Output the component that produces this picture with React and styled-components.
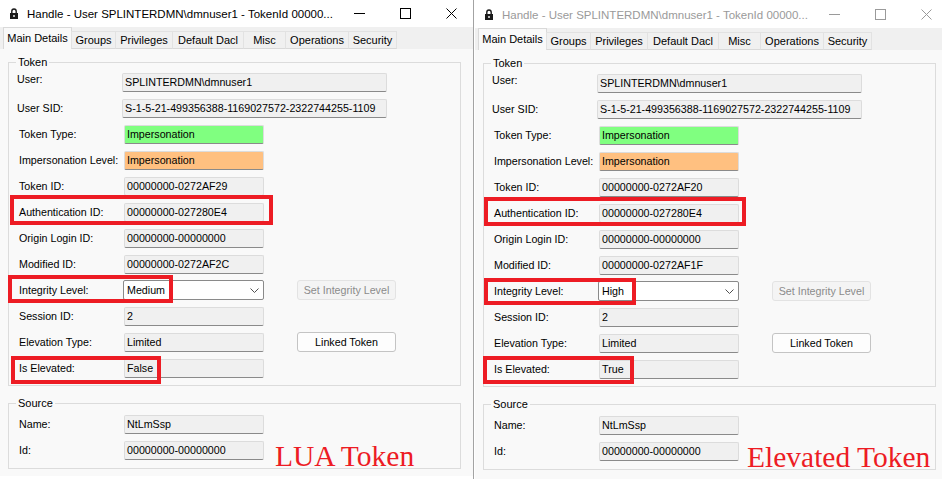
import React from 'react';
import styled, { createGlobalStyle, css } from 'styled-components';

const Global = createGlobalStyle`
  html, body { margin: 0; padding: 0; background: #ffffff; }
  body {
    width: 942px; height: 484px; overflow: hidden;
    font-family: "Liberation Sans", Arial, sans-serif;
    -webkit-font-smoothing: antialiased;
  }
`;

const Desktop = styled.div`
  display: flex;
  align-items: flex-start;
  width: 942px;
  height: 484px;
  overflow: hidden;
  background: #ffffff;
`;

const Window = styled.div`
  flex: none;
  width: 473px;
  height: ${p => p.$h}px;
  display: flex;
  flex-direction: column;
  background: #ffffff;
  ${p => p.$framed && css`
    width: 475px;
    border-left: 1px solid #a3a3a3;
    padding: 1px 0 0 1px;
    box-sizing: border-box;
  `}
`;

const TitleBar = styled.div`
  flex: none;
  height: 27px;
  display: flex;
  align-items: center;
  background: #ffffff;
  color: ${p => (p.$active ? '#000000' : '#9a9a9a')};
`;

const LockIcon = styled.svg`
  flex: none;
  margin-left: 10px;
  width: 8px;
  height: 11px;
`;

const TitleText = styled.div`
  flex: 1;
  margin-left: 9px;
  font-size: 11.5px;
  white-space: nowrap;
  overflow: hidden;
`;

const Controls = styled.div`
  flex: none;
  display: flex;
  margin-right: -1px;
`;

const CtrlButton = styled.div`
  width: 46px;
  height: 27px;
  display: flex;
  align-items: center;
  justify-content: center;
`;

const TabStrip = styled.div`
  flex: none;
  height: 22px;
  display: flex;
  align-items: flex-end;
  padding-left: 3px;
  background: #f0f0f0;
  position: relative;
  z-index: 1;
`;

const Tab = styled.div`
  flex: none;
  box-sizing: border-box;
  width: ${p => p.$w}px;
  height: ${p => (p.$selected ? 22 : 18)}px;
  display: flex;
  align-items: center;
  justify-content: center;
  font-size: 11px;
  color: #000;
  background: ${p => (p.$selected ? '#f9f9f9' : '#f0f0f0')};
  border: 1px solid ${p => (p.$selected ? '#d9d9d9' : '#e2e2e2')};
  border-bottom: ${p => (p.$selected ? 'none' : '1px solid #d9d9d9')};
  margin-left: ${p => (p.$first ? 0 : -1)}px;
  padding-bottom: ${p => (p.$selected ? 2 : 0)}px;
`;

const TabPage = styled.div`
  flex: 1;
  background: #f9f9f9;
  border-top: 1px solid #d9d9d9;
  margin-top: -1px;
  padding: 6px 0 0 8px;
  box-sizing: border-box;
`;

const Group = styled.fieldset`
  margin: ${p => p.$mt}px 0 0 0;
  width: 453px;
  box-sizing: border-box;
  border: 1px solid #dcdcdc;
  padding: ${p => p.$pt || 0}px 0 ${p => p.$pb}px 10px;
  min-width: 0;
`;

const Legend = styled.legend`
  margin-left: -3px;
  padding: 0 2px;
  font-size: 11px;
  line-height: 14px;
  color: #000;
`;

const Row = styled.div`
  position: relative;
  height: 26px;
  display: flex;
  align-items: center;
`;

const Label = styled.div`
  flex: none;
  width: 105px;
  box-sizing: border-box;
  margin-left: ${p => p.$shift || 0}px;
  padding-right: ${p => -(p.$shift || 0)}px;
  margin-top: ${p => (p.$lift ? -6 : 0)}px;
  font-size: 10.7px;
  color: #000;
  white-space: nowrap;
`;

const tones = {
  plain: '#f0f0f0',
  green: '#80ff80',
  orange: '#ffc080',
};

const Field = styled.div`
  flex: none;
  box-sizing: border-box;
  width: ${p => (p.$wide ? 265 : 140)}px;
  height: 19px;
  padding: 0 0 0 2px;
  background: ${p => tones[p.$tone || 'plain']};
  border: 1px solid #dcdcdc;
  border-bottom-color: #8a8a8a;
  border-radius: 2px;
  font-size: 10.7px;
  line-height: 17px;
  color: #000;
  white-space: nowrap;
  overflow: hidden;
`;

const Combo = styled.div`
  flex: none;
  box-sizing: border-box;
  width: 141px;
  height: 20px;
  margin-left: -1px;
  padding: 0 4px 0 3px;
  display: flex;
  align-items: center;
  justify-content: space-between;
  background: #ffffff;
  border: 1px solid #8a8a8a;
  border-radius: 2px;
  font-size: 10.7px;
  color: #000;
`;

const ActionButton = styled.div`
  flex: none;
  box-sizing: border-box;
  margin-left: 33px;
  width: 99px;
  height: 20px;
  display: flex;
  align-items: center;
  justify-content: center;
  border-radius: 3px;
  font-size: 10.7px;
  ${p => p.$disabled ? css`
    background: #f4f4f4;
    border: 1px solid #e3e3e3;
    color: #8b8b8b;
  ` : css`
    background: #fdfdfd;
    border: 1px solid #c4c4c4;
    color: #000;
  `}
`;

const Mark = styled.div`
  position: absolute;
  box-sizing: border-box;
  border: 4px solid #ed1c24;
  pointer-events: none;
`;

const Note = styled.div`
  flex: none;
  align-self: flex-end;
  height: 26px;
  margin-left: ${p => p.$gap}px;
  margin-bottom: -6px;
  font-family: "Liberation Serif", "Times New Roman", serif;
  font-size: 29.5px;
  line-height: 26px;
  color: #ed1c24;
  white-space: nowrap;
`;

const Lock = () => (
  <LockIcon viewBox="0 0 8 11">
    <path d="M1.8 5V3.2a2.2 2.2 0 0 1 4.4 0V5" fill="none" stroke="#1a1a1a" strokeWidth="1.4" />
    <rect x="0" y="5" width="8" height="6" fill="#1a1a1a" />
    <rect x="3.3" y="7" width="1.4" height="2" fill="#ffffff" />
  </LockIcon>
);

const Chevron = () => (
  <svg width="9" height="5" viewBox="0 0 9 5">
    <polyline points="0.5,0.5 4.5,4.5 8.5,0.5" fill="none" stroke="#505050" strokeWidth="1" />
  </svg>
);

const WindowControls = ({ color }) => (
  <Controls>
    <CtrlButton>
      <svg width="11" height="11" viewBox="0 0 11 11">
        <line x1="0" y1="5.5" x2="11" y2="5.5" stroke={color} strokeWidth="1" />
      </svg>
    </CtrlButton>
    <CtrlButton>
      <svg width="11" height="11" viewBox="0 0 11 11">
        <rect x="0.5" y="0.5" width="10" height="10" fill="none" stroke={color} strokeWidth="1" />
      </svg>
    </CtrlButton>
    <CtrlButton>
      <svg width="11" height="11" viewBox="0 0 11 11">
        <path d="M0.5 0.5L10.5 10.5M10.5 0.5L0.5 10.5" stroke={color} strokeWidth="1" />
      </svg>
    </CtrlButton>
  </Controls>
);

const tabs = [
  { name: 'Main Details', w: 69 },
  { name: 'Groups', w: 45 },
  { name: 'Privileges', w: 58 },
  { name: 'Default Dacl', w: 72 },
  { name: 'Misc', w: 43 },
  { name: 'Operations', w: 64 },
  { name: 'Security', w: 49 },
];

const windows = [
  {
    active: true,
    h: 476,
    tokenId: '00000000-0272AF29',
    modifiedId: '00000000-0272AF2C',
    integrity: 'Medium',
    elevated: 'False',
    marks: {
      auth: { x: -9, y: -4.5, w: 263, h: 30 },
      integrity: { x: -11, y: -2.5, w: 165, h: 28 },
      elevated: { x: -8, y: 0.5, w: 150, h: 28 },
    },
    note: 'LUA Token',
    noteGap: 11,
  },
  {
    active: false,
    h: 479,
    tokenId: '00000000-0272AF20',
    modifiedId: '00000000-0272AF1F',
    integrity: 'High',
    elevated: 'True',
    marks: {
      auth: { x: -10, y: -3.5, w: 262, h: 29 },
      integrity: { x: -10, y: -0.5, w: 152, h: 27 },
      elevated: { x: -11, y: -0.5, w: 151, h: 28 },
    },
    note: 'Elevated Token',
    noteGap: 8,
  },
];

const MarkBox = ({ m }) => (
  <Mark style={{ left: m.x, top: m.y, width: m.w, height: m.h }} />
);

const TokenWindow = ({ data, framed }) => {
  const rows = [
    { label: 'User:', value: 'SPLINTERDMN\\dmnuser1', wide: true, shift: -2, lift: true },
    { label: 'User SID:', value: 'S-1-5-21-499356388-1169027572-2322744255-1109', wide: true, shift: -2 },
    { label: 'Token Type:', value: 'Impersonation', tone: 'green' },
    { label: 'Impersonation Level:', value: 'Impersonation', tone: 'orange' },
    { label: 'Token ID:', value: data.tokenId },
    { label: 'Authentication ID:', value: '00000000-027280E4', mark: data.marks.auth },
    { label: 'Origin Login ID:', value: '00000000-00000000' },
    { label: 'Modified ID:', value: data.modifiedId },
    { label: 'Integrity Level:', combo: data.integrity, mark: data.marks.integrity, button: { text: 'Set Integrity Level', disabled: true } },
    { label: 'Session ID:', value: '2' },
    { label: 'Elevation Type:', value: 'Limited', button: { text: 'Linked Token' } },
    { label: 'Is Elevated:', value: data.elevated, mark: data.marks.elevated },
  ];

  return (
    <Window $h={data.h} $framed={framed}>
      <TitleBar $active={data.active}>
        <Lock />
        <TitleText>Handle - User SPLINTERDMN\dmnuser1 - TokenId 00000...</TitleText>
        <WindowControls color={data.active ? '#000000' : '#9a9a9a'} />
      </TitleBar>
      <TabStrip>
        {tabs.map((t, i) => (
          <Tab key={t.name} $w={t.w} $selected={i === 0} $first={i === 0}>{t.name}</Tab>
        ))}
      </TabStrip>
      <TabPage>
        <Group $mt={0} $pb={4}>
          <Legend>Token</Legend>
          {rows.map(r => (
            <Row key={r.label}>
              <Label $shift={r.shift} $lift={r.lift}>{r.label}</Label>
              {r.combo ? (
                <Combo>
                  <span>{r.combo}</span>
                  <Chevron />
                </Combo>
              ) : (
                <Field $wide={r.wide} $tone={r.tone}>{r.value}</Field>
              )}
              {r.button && (
                <ActionButton $disabled={r.button.disabled}>{r.button.text}</ActionButton>
              )}
              {r.mark && <MarkBox m={r.mark} />}
            </Row>
          ))}
        </Group>
        <Group $mt={10} $pt={1} $pb={5}>
          <Legend>Source</Legend>
          <Row>
            <Label>Name:</Label>
            <Field>NtLmSsp</Field>
          </Row>
          <Row>
            <Label>Id:</Label>
            <Field>00000000-00000000</Field>
            <Note $gap={data.noteGap}>{data.note}</Note>
          </Row>
        </Group>
      </TabPage>
    </Window>
  );
};

export default function App() {
  return (
    <>
      <Global />
      <Desktop>
        <TokenWindow data={windows[0]} />
        <TokenWindow data={windows[1]} framed />
      </Desktop>
    </>
  );
}
